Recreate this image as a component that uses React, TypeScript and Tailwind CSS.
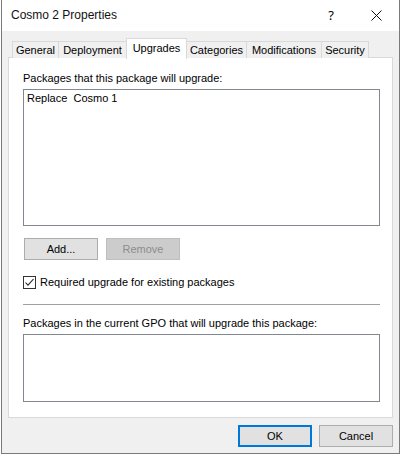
import React from 'react'

const tabs = [
    { label: 'General', w: 'w-[47px]' },
    { label: 'Deployment', w: 'w-[69px]' },
    { label: 'Upgrades', w: 'w-[61px]', active: true },
    { label: 'Categories', w: 'w-[61px]' },
    { label: 'Modifications', w: 'w-[76px]' },
    { label: 'Security', w: 'w-[48px]' },
]

function Button({ children, disabled, primary }: { children: React.ReactNode; disabled?: boolean; primary?: boolean }) {
    return (
        <div
            className={
                'w-[74px] h-[22px] flex items-center justify-center border ' +
                (disabled
                    ? 'bg-[#cccccc] border-[#bfbfbf] text-[#8d8d8d]'
                    : primary
                        ? 'bg-[#e1e1e1] border-[#0078d7] shadow-[inset_0_0_0_1px_#0078d7]'
                        : 'bg-[#e1e1e1] border-[#adadad]')
            }
        >
            {children}
        </div>
    )
}

export default function App() {
    return (
        <div className="w-[401px] h-[458px] bg-white text-black text-[11px] leading-[13px] font-['Liberation_Sans',Arial,sans-serif]">
            <div className="ml-px w-[399px] h-[454px] border-x border-b border-[#7a7a7a] bg-[#f0f0f0] flex flex-col">

                {/* Title bar */}
                <div className="h-[31px] bg-white flex items-center shrink-0">
                    <span className="pl-[9px] flex-1 text-[12px] text-[#111]">Cosmo 2 Properties</span>
                    <div className="w-[46px] h-full flex items-center justify-center text-[13px] font-['Noto_Sans',sans-serif]">?</div>
                    <div className="w-[45px] h-full flex items-center justify-center">
                        <svg width="11" height="11" viewBox="0 0 11 11" fill="none" stroke="#111" strokeWidth="1">
                            <path d="M0.5 0.5 L10.5 10.5 M10.5 0.5 L0.5 10.5" />
                        </svg>
                    </div>
                </div>

                {/* Tabs */}
                <div className="px-[6px] pt-[6px]">
                    <div className="relative z-10 flex items-end h-[21px] -mb-px pl-[4px]">
                        {tabs.map((t, i) =>
                            t.active ? (
                                <div key={t.label} className={`${t.w} h-[21px] -mb-px -ml-px bg-white border border-b-0 border-[#d9d9d9] flex items-start justify-center pt-[3px]`}>
                                    {t.label}
                                </div>
                            ) : (
                                <div key={t.label} className={`${t.w} h-[17px] ${i > 0 ? '-ml-px' : ''} bg-[#f0f0f0] border border-b-0 border-[#d9d9d9] flex items-center justify-center`}>
                                    {t.label}
                                </div>
                            )
                        )}
                    </div>

                    {/* Panel */}
                    <div className="h-[361px] bg-white border border-[#d9d9d9] pl-[14px] pt-[14px] flex flex-col">
                        <div>Packages that this package will upgrade:</div>
                        <div className="mt-[4px] w-[357px] h-[137px] border border-[#828790] bg-white pl-[3px] pt-[2px]">
                            Replace&nbsp;&nbsp;Cosmo 1
                        </div>

                        <div className="mt-[12px] ml-px flex gap-[8px]">
                            <Button>Add...</Button>
                            <Button disabled>Remove</Button>
                        </div>

                        <div className="mt-[16px] flex items-center gap-[4px]">
                            <div className="w-[13px] h-[13px] border border-[#333333] bg-white flex items-center justify-center">
                                <svg width="11" height="11" viewBox="0 0 11 11" fill="none" stroke="#222" strokeWidth="1.1">
                                    <path d="M1.5 5.5 L4 8.2 L9.5 2" />
                                </svg>
                            </div>
                            <span>Required upgrade for existing packages</span>
                        </div>

                        <div className="mt-[15px] w-[357px] h-px bg-[#a0a0a0]" />

                        <div className="mt-[12px]">Packages in the current GPO that will upgrade this package:</div>
                        <div className="mt-[4px] w-[357px] h-[68px] border border-[#828790] bg-white" />
                    </div>
                </div>

                {/* Footer */}
                <div className="flex justify-end gap-[7px] pr-[6px] pt-[7px]">
                    <Button primary>OK</Button>
                    <Button>Cancel</Button>
                </div>
            </div>
        </div>
    )
}
